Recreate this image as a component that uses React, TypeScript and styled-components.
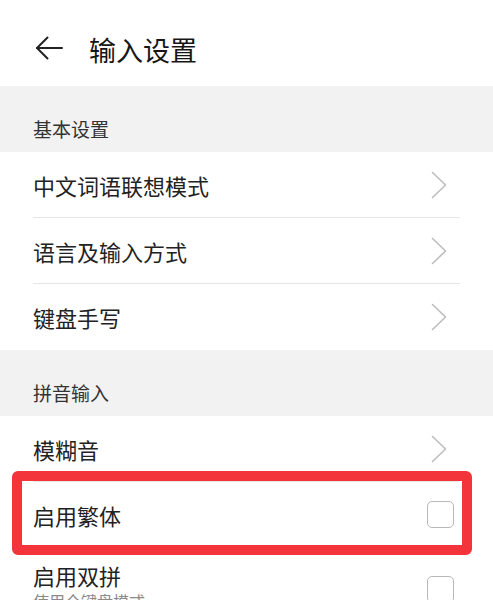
import React from "react";
import styled, { createGlobalStyle } from "styled-components";

const Global = createGlobalStyle`
  html, body {
    margin: 0;
    padding: 0;
    background: #ffffff;
  }
  body {
    font-family: "Noto Sans CJK SC", "Noto Sans", sans-serif;
    -webkit-font-smoothing: antialiased;
  }
`;

const Page = styled.div`
  width: 493px;
  height: 600px;
  overflow: hidden;
  background: #ffffff;
`;

const Header = styled.header`
  height: 86px;
  display: flex;
  align-items: center;
  padding-left: 35px;
  box-sizing: border-box;
`;

const BackButton = styled.button`
  border: 0;
  background: none;
  padding: 0;
  margin: 0 26px 0 0;
  width: 28px;
  height: 24px;
  display: flex;
  align-items: center;
  justify-content: center;
  transform: translateY(5px);
`;

const Title = styled.h1`
  margin: 0;
  font-size: 27px;
  line-height: 34px;
  font-weight: 400;
  color: #161616;
  transform: translateY(7px);
`;

const SectionHeader = styled.div`
  height: 66px;
  background: #f2f2f2;
  box-sizing: border-box;
  padding: 0 33px 11px;
  display: flex;
  align-items: flex-end;
  font-size: 19px;
  line-height: 24px;
  color: #333333;
`;

const Row = styled.div<{ $last?: boolean; $tall?: boolean }>`
  height: ${(p) => (p.$tall ? 82 : 66)}px;
  margin: 0 33px;
  box-sizing: border-box;
  display: flex;
  align-items: center;
  justify-content: space-between;
  border-bottom: ${(p) => (p.$last ? "none" : "1px solid #e6e6e6")};
`;

const Texts = styled.div`
  display: flex;
  flex-direction: column;
`;

const RowTitle = styled.span`
  font-size: 22px;
  line-height: 30px;
  color: #222222;
`;

const RowSub = styled.span`
  font-size: 16px;
  line-height: 22px;
  color: #8a8a8a;
`;

const ChevronWrap = styled.span`
  display: flex;
  margin-right: 13px;
`;

const Checkbox = styled.span`
  width: 27px;
  height: 27px;
  box-sizing: border-box;
  border: 1.5px solid #b8b8b8;
  border-radius: 5px;
  margin-right: 6px;
  background: #fff;
`;

const Highlighted = styled.div`
  position: relative;
`;

const Highlight = styled.div`
  position: absolute;
  top: -11px;
  bottom: -7px;
  left: 12px;
  right: 21px;
  border: 10px solid #f3343a;
  border-radius: 6px;
  pointer-events: none;
  z-index: 2;
`;

const TallRowTitle = styled(RowTitle)`
  margin-top: -6px;
`;

const BackArrow = () => (
  <svg width="28" height="24" viewBox="0 0 28 24" fill="none">
    <path d="M27 12H2" stroke="#222" strokeWidth="2" strokeLinecap="round" />
    <path
      d="M12.5 1.5L2 12l10.5 10.5"
      stroke="#222"
      strokeWidth="2"
      strokeLinecap="round"
      strokeLinejoin="round"
    />
  </svg>
);

const Chevron = () => (
  <ChevronWrap>
    <svg width="16" height="28" viewBox="0 0 16 28" fill="none">
      <path
        d="M1.5 1.5L14.5 14L1.5 26.5"
        stroke="#bdbdbd"
        strokeWidth="1.6"
        strokeLinecap="round"
        strokeLinejoin="round"
      />
    </svg>
  </ChevronWrap>
);

export default function App() {
  return (
    <Page>
      <Global />
      <Header>
        <BackButton aria-label="返回">
          <BackArrow />
        </BackButton>
        <Title>输入设置</Title>
      </Header>

      <SectionHeader>基本设置</SectionHeader>
      <Row>
        <RowTitle>中文词语联想模式</RowTitle>
        <Chevron />
      </Row>
      <Row>
        <RowTitle>语言及输入方式</RowTitle>
        <Chevron />
      </Row>
      <Row $last>
        <RowTitle>键盘手写</RowTitle>
        <Chevron />
      </Row>

      <SectionHeader>拼音输入</SectionHeader>
      <Row>
        <RowTitle>模糊音</RowTitle>
        <Chevron />
      </Row>
      <Highlighted>
        <Row>
          <RowTitle>启用繁体</RowTitle>
          <Checkbox />
        </Row>
        <Highlight />
      </Highlighted>
      <Row $tall $last>
        <Texts>
          <TallRowTitle>启用双拼</TallRowTitle>
          <RowSub>使用全键盘模式</RowSub>
        </Texts>
        <Checkbox />
      </Row>
    </Page>
  );
}
